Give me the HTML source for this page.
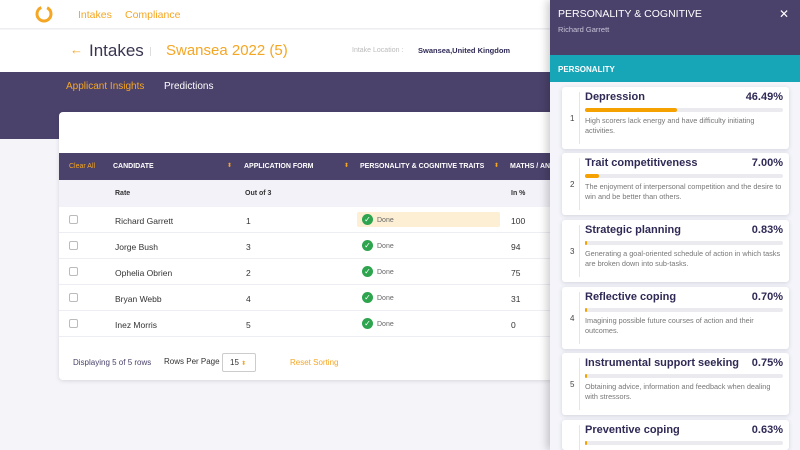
<!DOCTYPE html><html><head><style>
*{margin:0;padding:0;box-sizing:border-box}
html,body{width:800px;height:450px;overflow:hidden}
body{background:#f4f4f9;font-family:"Liberation Sans",sans-serif;position:relative}
.a{position:absolute}
.o{color:#f5a623}
.th{color:#fff;font-size:7px;font-weight:bold;top:163px}
.row{position:absolute;left:59px;width:491px;height:26px;border-bottom:1px solid #eceef3;font-size:8.5px;color:#333}
.row span{position:absolute;top:9px}
.cb{position:absolute;left:10px;top:8px;width:9px;height:9px;border:1px solid #bbb;border-radius:2px;background:#fff}
.ck{position:absolute;left:303px;top:7px;width:11px;height:11px;border-radius:50%;background:#2ea44f;color:#fff;font-size:8px;line-height:11px;text-align:center}
.dn{left:318px;color:#666;font-size:7px;top:10px!important}
.card{position:absolute;left:562px;width:227px;height:62px;background:#fff;border-radius:3px;box-shadow:0 1px 4px rgba(60,60,100,.18);overflow:hidden}
.card .n{position:absolute;left:8px;top:27px;font-size:8px;color:#444}
.card .l{position:absolute;left:17px;top:5px;width:1px;height:52px;background:#e4e4ea}
.card .t{position:absolute;left:23px;top:4px;font-size:11px;font-weight:bold;color:#2f2a55}
.card .p{position:absolute;right:6px;top:4px;font-size:11px;font-weight:bold;color:#2f2a55}
.card .b{position:absolute;left:23px;top:21px;width:198px;height:4px;border-radius:2px;background:#ebebef}
.card .b i{position:absolute;left:0;top:0;height:4px;border-radius:2px;background:#f5a200}
.card .d{position:absolute;left:23px;top:29px;width:200px;font-size:7.3px;line-height:10px;color:#777}
</style></head><body>
<div class="a" style="left:0;top:0;width:550px;height:29px;background:#fff;border-bottom:1px solid #eee"></div>
<svg class="a" style="left:34px;top:4px" width="20" height="20" viewBox="0 0 20 20"><circle cx="10" cy="10" r="7" fill="none" stroke="#f5a623" stroke-width="3" stroke-dasharray="30 6"/></svg>
<div class="a o" style="left:78px;top:9px;font-size:10.5px">Intakes</div>
<div class="a o" style="left:125px;top:9px;font-size:10.5px">Compliance</div>
<div class="a" style="left:0;top:30px;width:550px;height:42px;background:#fff"></div>
<div class="a o" style="left:70px;top:42px;font-size:13px">←</div>
<div class="a" style="left:89px;top:41px;font-size:17px;color:#3a3550">Intakes</div>
<div class="a" style="left:150px;top:47px;width:1px;height:9px;background:#ddd"></div>
<div class="a o" style="left:166px;top:42px;font-size:15px">Swansea 2022 (5)</div>
<div class="a" style="left:352px;top:47px;font-size:7px;color:#bbb">Intake Location :</div>
<div class="a" style="left:418px;top:46px;font-size:7.5px;font-weight:bold;color:#2f2a55">Swansea,United Kingdom</div>
<div class="a" style="left:0;top:72px;width:550px;height:67px;background:#4b426b"></div>
<div class="a o" style="left:66px;top:81px;font-size:10px">Applicant Insights</div>
<div class="a" style="left:164px;top:81px;font-size:10px;color:#fff">Predictions</div>
<div class="a" style="left:59px;top:112px;width:500px;height:268px;background:#fff;border-radius:4px;box-shadow:0 1px 4px rgba(0,0,0,.12)"></div>
<div class="a" style="left:59px;top:153px;width:491px;height:27px;background:#4b426b"></div>
<div class="a o" style="left:69px;top:163px;font-size:7px">Clear All</div>
<div class="a th" style="left:113px">CANDIDATE</div>
<div class="a th" style="left:244px">APPLICATION FORM</div>
<div class="a th" style="left:360px">PERSONALITY &amp; COGNITIVE TRAITS</div>
<div class="a th" style="left:510px">MATHS / AN</div>
<div class="a o" style="left:227px;top:162px;font-size:6px">⬍</div>
<div class="a o" style="left:344px;top:162px;font-size:6px">⬍</div>
<div class="a o" style="left:494px;top:162px;font-size:6px">⬍</div>
<div class="a" style="left:59px;top:180px;width:491px;height:27px;background:#f2f2f8"></div>
<div class="a" style="left:115px;top:190px;font-size:7px;font-weight:bold;color:#333">Rate</div>
<div class="a" style="left:245px;top:190px;font-size:7px;font-weight:bold;color:#333">Out of 3</div>
<div class="a" style="left:511px;top:190px;font-size:7px;font-weight:bold;color:#333">In %</div>
<div class="row" style="top:207px"><div class="a" style="left:298px;top:5px;width:143px;height:15px;background:#fdefd3;border-radius:2px"></div><div class="cb"></div><span style="left:56px">Richard Garrett</span><span style="left:187px">1</span><div class="ck">✓</div><span class="dn">Done</span><span style="left:452px">100</span></div>
<div class="row" style="top:233px"><div class="cb"></div><span style="left:56px">Jorge Bush</span><span style="left:187px">3</span><div class="ck">✓</div><span class="dn">Done</span><span style="left:452px">94</span></div>
<div class="row" style="top:259px"><div class="cb"></div><span style="left:56px">Ophelia Obrien</span><span style="left:187px">2</span><div class="ck">✓</div><span class="dn">Done</span><span style="left:452px">75</span></div>
<div class="row" style="top:285px"><div class="cb"></div><span style="left:56px">Bryan Webb</span><span style="left:187px">4</span><div class="ck">✓</div><span class="dn">Done</span><span style="left:452px">31</span></div>
<div class="row" style="top:311px"><div class="cb"></div><span style="left:56px">Inez Morris</span><span style="left:187px">5</span><div class="ck">✓</div><span class="dn">Done</span><span style="left:452px">0</span></div>
<div class="a" style="left:73px;top:358px;font-size:8px;color:#4b426b">Displaying 5 of 5 rows</div>
<div class="a" style="left:164px;top:357px;font-size:8px;color:#333">Rows Per Page</div>
<div class="a" style="left:222px;top:353px;width:34px;height:19px;border:1px solid #ccc;border-radius:2px;font-size:8px;color:#333;padding:4px 0 0 7px">15 <span class="o" style="font-size:6px">⬍</span></div>
<div class="a o" style="left:290px;top:358px;font-size:8px">Reset Sorting</div>
<div class="a" style="left:550px;top:0;width:250px;height:450px;background:#f4f4fa;box-shadow:-3px 0 8px rgba(0,0,0,.2)"></div>
<div class="a" style="left:550px;top:0;width:250px;height:55px;background:#4b426b"></div>
<div class="a" style="left:558px;top:8px;font-size:10.5px;color:#fff">PERSONALITY &amp; COGNITIVE</div>
<div class="a" style="left:558px;top:25px;font-size:7.5px;color:#c8c4d8">Richard Garrett</div>
<div class="a" style="left:779px;top:7px;font-size:12px;color:#fff">✕</div>
<div class="a" style="left:550px;top:55px;width:250px;height:27px;background:#17a5b8"></div>
<div class="a" style="left:558px;top:65px;font-size:8px;font-weight:bold;color:#fff">PERSONALITY</div>
<div class="card" style="top:87px"><div class="n">1</div><div class="l"></div><div class="t">Depression</div><div class="p">46.49%</div><div class="b"><i style="width:92px"></i></div><div class="d">High scorers lack energy and have difficulty initiating activities.</div></div>
<div class="card" style="top:153px"><div class="n">2</div><div class="l"></div><div class="t">Trait competitiveness</div><div class="p">7.00%</div><div class="b"><i style="width:14px"></i></div><div class="d">The enjoyment of interpersonal competition and the desire to win and be better than others.</div></div>
<div class="card" style="top:220px"><div class="n">3</div><div class="l"></div><div class="t">Strategic planning</div><div class="p">0.83%</div><div class="b"><i style="width:2px"></i></div><div class="d">Generating a goal-oriented schedule of action in which tasks are broken down into sub-tasks.</div></div>
<div class="card" style="top:287px"><div class="n">4</div><div class="l"></div><div class="t">Reflective coping</div><div class="p">0.70%</div><div class="b"><i style="width:2px"></i></div><div class="d">Imagining possible future courses of action and their outcomes.</div></div>
<div class="card" style="top:353px"><div class="n">5</div><div class="l"></div><div class="t">Instrumental support seeking</div><div class="p">0.75%</div><div class="b"><i style="width:2px"></i></div><div class="d">Obtaining advice, information and feedback when dealing with stressors.</div></div>
<div class="card" style="top:420px;height:30px"><div class="l"></div><div class="t">Preventive coping</div><div class="p">0.63%</div><div class="b"><i style="width:2px"></i></div></div>
</body></html>
